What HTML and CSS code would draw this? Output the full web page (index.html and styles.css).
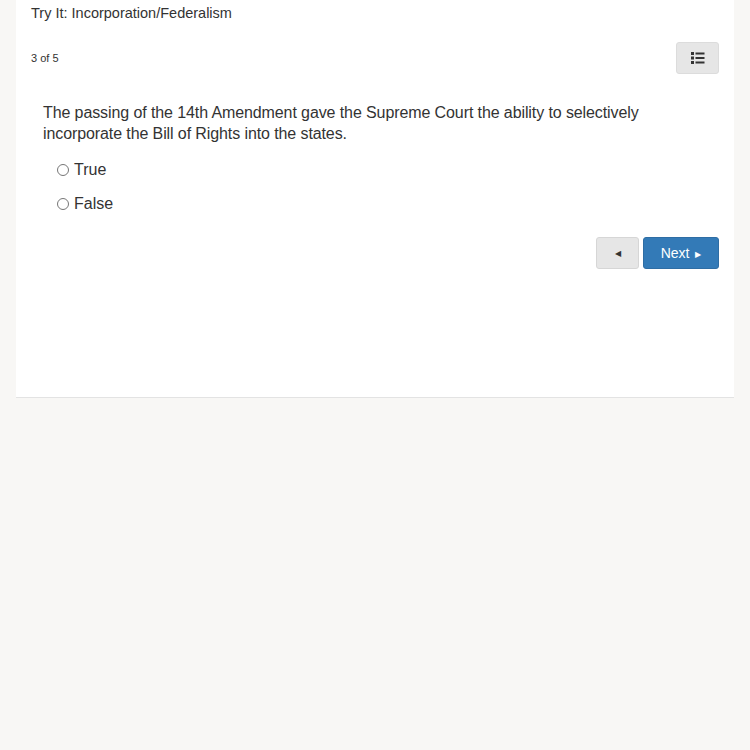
FILE: index.html
```html
<!DOCTYPE html>
<html>
<head>
<meta charset="utf-8">
<link rel="stylesheet" href="styles.css">
</head>
<body>
<div class="card">
  <div class="title">Try It: Incorporation/Federalism</div>
  <div class="toolbar">
    <span class="count">3 of 5</span>
    <button class="list-btn" aria-label="list">
      <svg width="14" height="12" viewBox="0 0 14 12">
        <rect x="0" y="0" width="3" height="3" fill="#333"/>
        <rect x="0" y="4.5" width="3" height="3" fill="#333"/>
        <rect x="0" y="9" width="3" height="3" fill="#333"/>
        <rect x="4.5" y="0.5" width="9" height="2" fill="#333"/>
        <rect x="4.5" y="5" width="9" height="2" fill="#333"/>
        <rect x="4.5" y="9.5" width="9" height="2" fill="#333"/>
      </svg>
    </button>
  </div>
  <div class="question">The passing of the 14th Amendment gave the Supreme Court the ability to selectively incorporate the Bill of Rights into the states.</div>
  <div class="options">
    <label class="opt"><input type="radio" name="a"><span>True</span></label>
    <label class="opt"><input type="radio" name="a"><span>False</span></label>
  </div>
  <div class="nav">
    <button class="btn prev">&#9664;</button>
    <button class="btn next">Next <span class="arr">&#9654;</span></button>
  </div>
</div>
</body>
</html>
```
FILE: styles.css
```css
html, body {
  margin: 0;
  padding: 0;
  background: #f8f7f5;
  font-family: "Liberation Sans", Arial, sans-serif;
  color: #333;
}
.card {
  margin: 0 16px;
  background: #fff;
  height: 398px;
  border-bottom: 1px solid #e3e3e3;
  box-sizing: border-box;
  padding: 0 15px;
}
.title {
  font-size: 14.5px;
  padding-top: 5px;
  height: 25px;
  line-height: 16px;
  color: #333;
}
.toolbar {
  display: flex;
  justify-content: space-between;
  align-items: center;
  margin-top: 12px;
  height: 32px;
}
.count {
  font-size: 11px;
  color: #333;
}
.list-btn {
  width: 43px;
  height: 32px;
  background: #e6e6e6;
  border: 1px solid #dcdcdc;
  border-radius: 3px;
  display: flex;
  align-items: center;
  justify-content: center;
  padding: 0;
}
.question {
  margin: 28px 12px 0 12px;
  font-size: 16px;
  line-height: 21px;
  color: #333;
  letter-spacing: -0.1px;
}
.options {
  margin-top: 15px;
  padding-left: 26px;
  display: flex;
  flex-direction: column;
  gap: 13px;
}
.opt {
  display: flex;
  align-items: center;
  font-size: 16px;
  height: 21px;
}
.opt input {
  margin: 0 5px 0 0;
  width: 12px;
  height: 12px;
}
.nav {
  margin-top: 23px;
  display: flex;
  justify-content: flex-end;
  gap: 4px;
}
.btn {
  height: 32px;
  border-radius: 3px;
  font-family: "Liberation Sans", Arial, sans-serif;
  font-size: 14px;
  padding: 0;
}
.prev {
  width: 43px;
  background: #e6e6e6;
  border: 1px solid #d6d6d6;
  color: #333;
  font-size: 8px;
}
.next {
  width: 76px;
  background: #337ab7;
  border: 1px solid #2e6da4;
  color: #fff;
}
.arr {
  font-size: 8px;
  vertical-align: 1px;
  margin-left: 2px;
}
```
